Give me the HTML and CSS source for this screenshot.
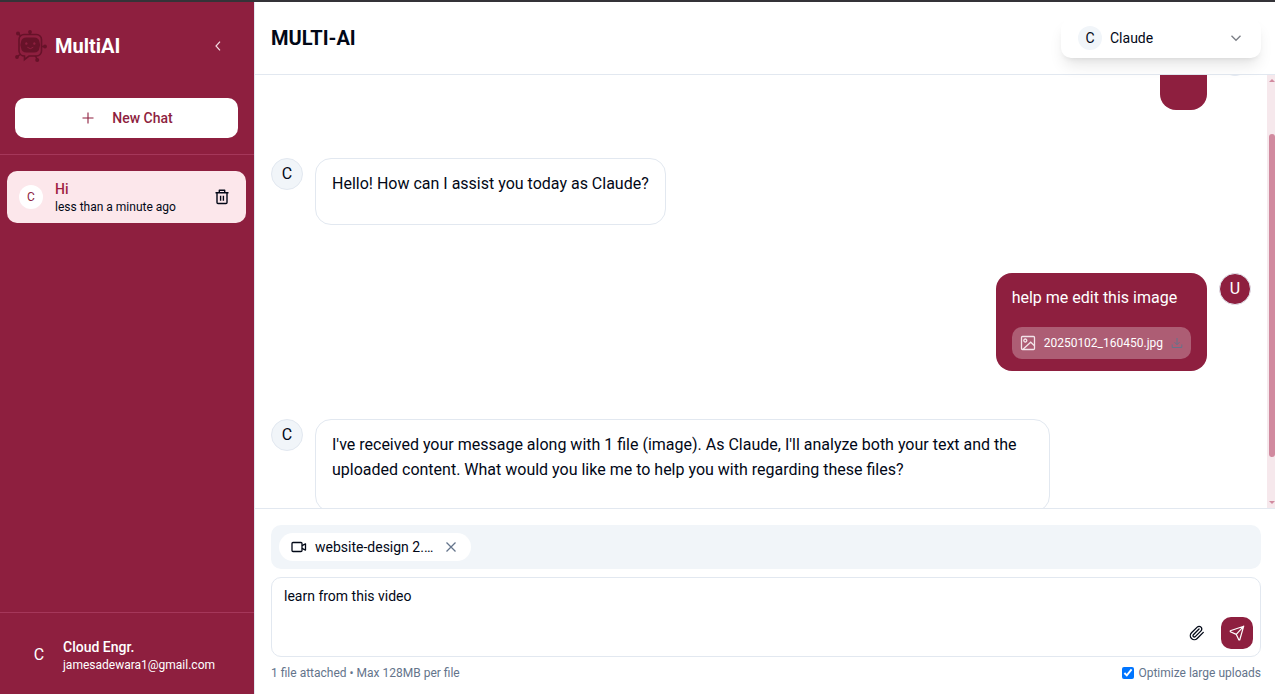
FILE: index.html
```html
<!DOCTYPE html>
<html lang="en">
<head>
<meta charset="utf-8">
<title>MultiAI</title>
<link rel="stylesheet" href="styles.css">
</head>
<body>
<div class="app">
  <aside class="sidebar">
    <div class="side-top">
      <div class="brand">
        <svg class="logo" viewBox="0 0 32 32" fill="none" stroke="currentColor" stroke-width="1.600">
          <path d="M9 4.500h12.500a5 5 0 0 1 5 5v11.500a5 5 0 0 1-5 5h-7.500l-4.500 3.500v-3.500a5.500 5.500 0 0 1-5.500-5v-11.500a5 5 0 0 1 5-5Z"/>
          <path d="M15 4.500V2M5.500 6L3.500 3.500M26.500 16.500h3M4.800 24.500l-2.500 2.500M20.500 26l1.500 3"/>
          <g fill="currentColor" stroke="none">
            <circle cx="15" cy="2" r="1.900"/><circle cx="3" cy="3.500" r="2"/><circle cx="30" cy="16.500" r="1.900"/><circle cx="2" cy="27" r="1.900"/><circle cx="22.200" cy="30" r="2"/>
            <path fill-rule="evenodd" d="M11.500 7.500h7.500q5 0 5.500 4.500 1.200 2.800 0 5.500-.5 5-5.500 5h-7.500q-5 0-5.500-5-1.200-2.700 0-5.500.5-4.500 5.500-4.500ZM11.300 12.200a1.200 1.300 0 1 0 .1 0ZM19.300 12.200a1.200 1.300 0 1 0 .1 0Z"/>
          </g>
          <path class="smile" d="M12.300 17.200q3 3 6 0"/>
        </svg>
        <span class="brand-name">MultiAI</span>
        <svg class="collapse" viewBox="0 0 16 16" fill="none" stroke="currentColor" stroke-width="1.200"><path d="M10 3.700L6 8l4 4.300"/></svg>
      </div>
      <button class="new-chat">
        <svg viewBox="0 0 16 16" fill="none" stroke="currentColor" stroke-width="1.100"><path d="M8 2.500v11M2.500 8h11"/></svg>
        <span>New Chat</span>
      </button>
    </div>
    <nav class="chats">
      <div class="chat">
        <span class="chat-avatar">C</span>
        <div class="chat-text"><div class="chat-title">Hi</div><div class="chat-time">less than a minute ago</div></div>
        <svg class="trash" viewBox="0 0 16 16" fill="none" stroke="currentColor" stroke-width="1.400" stroke-linejoin="round"><path d="M1.500 3.700h13M5.300 3.500V1.300h5.400v2.200M3 4v9.500q0 1 1 1h8q1 0 1-1V4"/><path d="M6.600 6.700v5M9.400 6.700v5"/></svg>
      </div>
    </nav>
    <div class="profile">
      <span class="profile-avatar">C</span>
      <div><div class="profile-name">Cloud Engr.</div><div class="profile-mail">jamesadewara1@gmail.com</div></div>
    </div>
  </aside>
  <main class="main">
    <header class="header">
      <h1>MULTI-AI</h1>
      <div class="model">
        <span class="model-avatar">C</span><span class="model-name">Claude</span>
        <svg viewBox="0 0 16 16" fill="none" stroke="currentColor" stroke-width="1.300"><path d="M3.500 5.700L8 10.300l4.500-4.600"/></svg>
      </div>
    </header>
    <section class="thread">
      <div class="messages">
        <div class="msg mine first"><div class="bubble"></div><span class="avatar"></span></div>
        <div class="msg"><span class="avatar">C</span><div class="bubble"><p class="spaced">Hello! How can I assist you today as Claude?</p></div></div>
        <div class="msg mine">
          <div class="bubble">
            <p class="spaced">help me edit this image</p>
            <div class="file">
              <svg class="file-image" viewBox="0 0 16 16" fill="none" stroke="currentColor" stroke-width="1.300"><rect x="1.500" y="1.500" width="13" height="13" rx="1"/><circle cx="5.300" cy="5.500" r="1.500"/><path d="M3 14.200l7.700-7 3.800 3.500"/></svg>
              <span>20250102_160450.jpg</span>
              <svg class="download" viewBox="0 0 12 12" fill="none" stroke="currentColor"><path d="M6 1v6.500M3.500 5.200L6 7.700l2.500-2.500M1.200 7.500v3h9.600v-3"/></svg>
            </div>
          </div>
          <span class="avatar">U</span>
        </div>
        <div class="msg"><span class="avatar">C</span><div class="bubble"><p class="spaced">I've received your message along with 1 file (image). As Claude, I'll analyze both your text and the uploaded content. What would you like me to help you with regarding these files?</p></div></div>
      </div>
      <div class="scrollbar"><i class="arrow up"></i><i class="thumb"></i><i class="arrow down"></i></div>
    </section>
    <footer class="composer">
      <div class="attachments">
        <div class="attachment">
          <svg class="video" viewBox="0 0 16 16" fill="none" stroke="currentColor" stroke-width="1.300" stroke-linejoin="round"><rect x="1" y="3.500" width="10" height="9" rx="1"/><path d="M11 6.700l3.500-1.800v6.200L11 9.300"/></svg>
          <span>website-design 2.…</span>
          <svg class="close" viewBox="0 0 16 16" fill="none" stroke="currentColor" stroke-width="1.250"><path d="M3.500 3.500l9 9M12.500 3.500l-9 9"/></svg>
        </div>
      </div>
      <div class="input">
        <p>learn from this video</p>
        <div class="actions">
          <svg class="clip" viewBox="0 0 24 24" fill="none" stroke="currentColor" stroke-width="2" stroke-linecap="round" stroke-linejoin="round"><path d="m21.440 11.050-9.190 9.190a6 6 0 0 1-8.490-8.490l8.570-8.570A4 4 0 1 1 18 8.840l-8.590 8.570a2 2 0 0 1-2.830-2.830l8.490-8.480"/></svg>
          <button class="send"><svg viewBox="0 0 16 16" fill="none" stroke="currentColor" stroke-width="1.200" stroke-linejoin="round"><path d="M14.700 1.200L1.300 5.800v.9l6 2.700 2.600 5.600h.8zM7.300 9.400l7.400-8.200"/></svg></button>
        </div>
      </div>
      <div class="hints">
        <span>1 file attached • Max 128MB per file</span>
        <label><input type="checkbox" checked>Optimize large uploads</label>
      </div>
    </footer>
  </main>
</div>
</body>
</html>
```
FILE: styles.css
```css
* { box-sizing: border-box; margin: 0; }
body { font-family: Roboto, "Liberation Sans", sans-serif; color: #020817; font-size: 14px; line-height: 20px; }
svg { flex: none; display: block; width: 16px; height: 16px; }
button { border: 0; padding: 0; font: inherit; }
.app { display: flex; height: 694px; border-top: 2px solid #343338; overflow: hidden; background: #fff; }
.sidebar { width: 255px; flex: none; display: flex; flex-direction: column; background: #8e1f3f; color: #fff; border-right: 1px solid #e2e8f0; }
.side-top { height: 153px; padding: 28px 16px 16px 15px; border-bottom: 1px solid #a5375a; }
.brand { display: flex; align-items: center; height: 32px; }
.brand .logo { width: 32px; height: 32px; color: #671229; overflow: visible; }
.smile { stroke: #8e1f3f; stroke-width: 1; }
.brand-name { margin-left: 8px; font-size: 20px; line-height: 28px; font-weight: 700; }
.collapse { margin-left: auto; margin-right: 12px; color: #f3dce3; }
.new-chat { margin-top: 36px; width: 100%; height: 40px; border-radius: 10px; background: #fff; color: #8e1f3f; font-weight: 500; display: flex; align-items: center; justify-content: center; gap: 16px; }
.chats { flex: 1; padding: 16px 8px 0 7px; }
.chat { height: 52px; border-radius: 10px; background: #fce7eb; display: flex; align-items: center; padding: 0 16px 0 12px; color: #020817; }
.chat-avatar { width: 24px; height: 24px; border-radius: 50%; background: #fff; color: #8e1f3f; font-size: 12px; line-height: 24px; text-align: center; margin-right: 12px; }
.chat-title { color: #9f1d42; font-weight: 500; line-height: 20px; }
.chat-time { font-size: 12px; line-height: 16px; }
.trash { margin-left: auto; }
.profile { height: 82px; border-top: 1px solid #a5375a; display: flex; align-items: center; padding: 3px 16px 0 23px; gap: 8px; }
.profile-avatar { width: 32px; text-align: center; font-size: 16px; line-height: 24px; margin-top: -1px; }
.profile-name { font-weight: 500; line-height: 20px; }
.profile-mail { font-size: 12px; line-height: 16px; }
.main { flex: 1; min-width: 0; display: flex; flex-direction: column; }
.header { height: 73px; flex: none; border-bottom: 1px solid #e2e8f0; padding: 0 14px 0 16px; display: flex; justify-content: space-between; align-items: center; }
h1 { font-size: 20px; line-height: 28px; font-weight: 700; }
.model { width: 200px; height: 40px; border-radius: 10px; background: #fff; box-shadow: 0 10px 15px -3px rgba(0,0,0,.1), 0 4px 6px -4px rgba(0,0,0,.1); display: flex; align-items: center; padding: 0 17px; }
.model-avatar { width: 24px; height: 24px; border-radius: 50%; background: #f1f5f9; text-align: center; line-height: 24px; margin-right: 8px; }
.model svg { margin-left: auto; color: #7b7e86; }
.thread { height: 433px; flex: none; display: flex; overflow: hidden; }
.messages { flex: 1; margin-top: -31px; padding: 0 16px; display: flex; flex-direction: column; gap: 48px; }
.msg { display: flex; align-items: flex-start; gap: 12px; font-size: 16px; line-height: 25.6px; }
.mine { justify-content: flex-end; }
.bubble { max-width: 75%; border: 1px solid #e2e8f0; border-radius: 16px; padding: 12px 16px; }
.mine .bubble { border: 0; background: #8e1f3f; color: #fff; }
.first .bubble { width: 47px; height: 65.6px; }
.spaced { margin-bottom: 16px; }
.avatar { width: 32px; height: 32px; flex: none; border-radius: 50%; border: 1px solid #e2e8f0; background: #f1f5f9; text-align: center; line-height: 29px; }
.mine .avatar { background: #8e1f3f; color: #fff; }
.mine.first .avatar { background: #e2e8f0; }
.file { height: 32px; border-radius: 10px; background: rgba(255,255,255,.28); display: flex; align-items: center; padding: 0 8px; font-size: 12px; line-height: 16px; }
.file-image { color: #f3e4e9; }
.file span { margin: 0 8px; padding-top: 1px; }
.download { width: 12px; height: 12px; color: #64748b; }
.scrollbar { width: 8px; background: #f6e8ec; display: flex; flex-direction: column; align-items: flex-end; padding: 4px 0 4px; }
.thumb { width: 6px; height: 323px; flex: none; border-radius: 3px; background: #d18a9f; }
.arrow { border: 3px solid transparent; width: 6px; height: 3px; flex: none; }
.up { border-top: 0; border-bottom-color: #d18a9f; margin-bottom: 52px; }
.down { border-bottom: 0; border-top-color: #d18a9f; margin-top: auto; }
.composer { flex: 1; border-top: 1px solid #e2e8f0; padding: 16px 14px 0 16px; }
.attachments { height: 44px; border-radius: 10px; background: #f1f5f9; padding: 8px; display: flex; }
.attachment { width: 192px; height: 28px; border-radius: 14px; background: #fff; display: flex; align-items: center; padding: 0 12px; }
.attachment span { margin: 0 auto 0 8px; }
.close { color: #64748b; }
.input { margin-top: 8px; height: 80px; border: 1px solid #e2e8f0; border-radius: 10px; padding: 8px 7px 7px 12px; display: flex; justify-content: space-between; }
.actions { display: flex; align-items: flex-end; gap: 16px; }
.clip { margin-bottom: 8px; }
.send { width: 32px; height: 32px; border-radius: 10px; background: #8e1f3f; color: #fff; display: flex; align-items: center; justify-content: center; }
.hints { margin-top: 8px; display: flex; justify-content: space-between; font-size: 12px; line-height: 16px; color: #64748b; }
.hints label { display: flex; align-items: center; }
.hints input { margin: 0 4px 0 0; width: 12px; height: 12px; accent-color: #0075ff; }
```
